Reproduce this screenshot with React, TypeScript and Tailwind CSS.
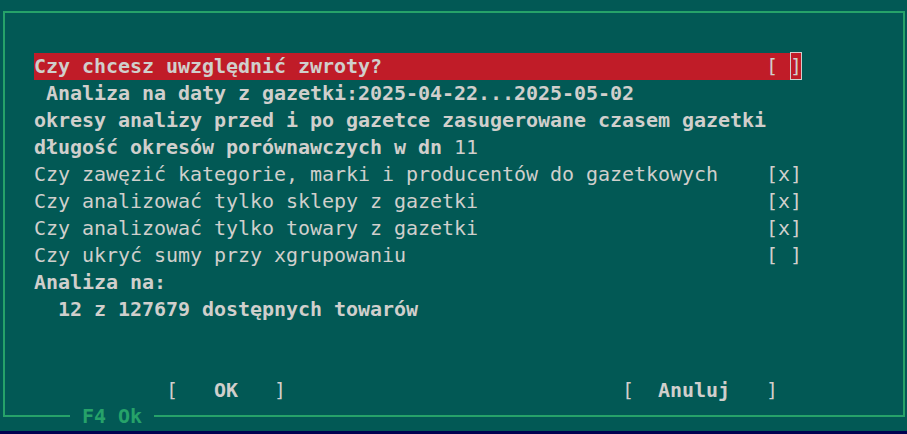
import React from 'react';

// Terminal-style dialog: every row is 27px high, every cell 12px wide.
const COLS = 61; // checkbox column, counted from the text start

interface Seg {
  text: string;
  bold?: boolean;
}

function Line({ segs, className = '' }: { segs: Seg[]; className?: string }) {
  return (
    <div className={`h-[27px] leading-[27px] whitespace-pre ${className}`}>
      {segs.map((s, i) => (
        <span key={i} className={s.bold ? 'font-bold' : 'font-normal'}>
          {s.text}
        </span>
      ))}
    </div>
  );
}

function CheckLine({ label, checked }: { label: string; checked: boolean }) {
  return (
    <Line
      segs={[
        { text: label.padEnd(COLS) },
        { text: checked ? '[x]' : '[ ]' },
      ]}
    />
  );
}

export default function App() {
  const options = [
    { label: 'Czy zawęzić kategorie, marki i producentów do gazetkowych', checked: true },
    { label: 'Czy analizować tylko sklepy z gazetki', checked: true },
    { label: 'Czy analizować tylko towary z gazetki', checked: true },
    { label: 'Czy ukryć sumy przy xgrupowaniu', checked: false },
  ];

  return (
    <div
      className="w-[907px] h-[434px] bg-[#025955] text-[#d0cfcc] text-[20px] tracking-[-0.04px] flex flex-col overflow-hidden"
      style={{ fontFamily: '"DejaVu Sans Mono", "Liberation Mono", monospace' }}
    >
      <div className="pt-[11px] pl-[3px] pr-[2px]">
        <div className="relative h-[406px] border-2 border-[#26a269] pt-[40px] pl-[29px]">
          {/* focused row */}
          <div className="h-[27px] leading-[27px] whitespace-pre w-[768px] bg-[#c01c28] flex">
            <span className="font-bold">{'Czy chcesz uwzględnić zwroty?'.padEnd(COLS)}</span>
            <span>{'[ '}</span>
            <span className="inline-block w-[13px] h-[28px] -mt-[1px] leading-[28px] outline outline-1 outline-[#d0cfcc] -outline-offset-1">
              ]
            </span>
          </div>

          <Line segs={[{ text: ' Analiza na daty z gazetki:2025-04-22...2025-05-02', bold: true }]} />
          <Line segs={[{ text: 'okresy analizy przed i po gazetce zasugerowane czasem gazetki', bold: true }]} />
          <Line segs={[{ text: 'długość okresów porównawczych w dn ', bold: true }, { text: '11' }]} />

          {options.map((o) => (
            <CheckLine key={o.label} label={o.label} checked={o.checked} />
          ))}

          <Line segs={[{ text: 'Analiza na:', bold: true }]} />
          <Line segs={[{ text: '  12 z 127679 dostępnych towarów', bold: true }]} />
          <div className="h-[54px]" />

          <Line
            segs={[
              { text: ' '.repeat(11) + '[   ' },
              { text: 'OK', bold: true },
              { text: '   ]' + ' '.repeat(28) + '[  ' },
              { text: 'Anuluj', bold: true },
              { text: '   ]' },
            ]}
          />

          {/* title on the bottom border */}
          <div className="absolute left-[65px] -bottom-[15px] h-[27px] leading-[27px] px-[12px] bg-[#025955] text-[#26a269] font-bold whitespace-pre">
            F4 Ok
          </div>
        </div>
      </div>
      <div className="flex-1" />
      <div className="h-[3px] bg-[#010150]" />
    </div>
  );
}
